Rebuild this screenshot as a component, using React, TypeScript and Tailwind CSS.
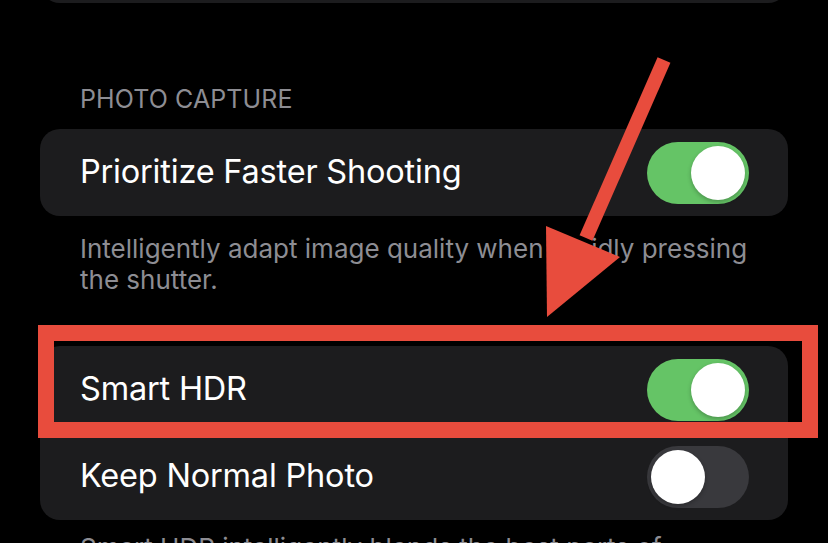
import React from "react";

const Toggle = ({ on }: { on: boolean }) => (
  <div
    className={
      on
        ? "w-[102px] h-[62px] rounded-full bg-[#65c466] p-[4px] flex justify-end"
        : "w-[102px] h-[62px] rounded-full bg-[#39393d] p-[4px] flex justify-start"
    }
  >
    <div className="w-[54px] h-[54px] rounded-full bg-white shadow-[0_2px_4px_rgba(0,0,0,0.25)]" />
  </div>
);

const Row = ({ label, on, divider }: { label: string; on: boolean; divider?: boolean }) => (
  <div className="relative h-[87px] flex items-center justify-between pl-[40px] pr-[39px]">
    <span className="text-[32.5px] text-white tracking-[-0.2px]">{label}</span>
    <Toggle on={on} />
    {divider && <div className="absolute left-[40px] right-0 bottom-0 h-px bg-[#38383a]" />}
  </div>
);

const Arrow = () => (
  <svg
    className="absolute left-0 top-0 pointer-events-none"
    width="828"
    height="543"
    viewBox="0 0 828 543"
  >
    <line x1="664" y1="60" x2="586" y2="238" stroke="#e84c3d" strokeWidth="14" />
    <polygon points="546,226 620,257 547,317" fill="#e84c3d" />
  </svg>
);

export default function App() {
  return (
    <div
      className="relative w-[828px] h-[543px] overflow-hidden bg-black"
      style={{ fontFamily: "Inter, 'Noto Sans', sans-serif" }}
    >
      <div className="mx-[40px] mt-[-80px] h-[83px] rounded-[20px] bg-[#1c1c1e]" />

      <div className="pl-[80px] mt-[82px] text-[25px] leading-[29px] text-[#8d8d93] tracking-[0.1px]">
        PHOTO CAPTURE
      </div>

      <div className="mx-[40px] mt-[15px] rounded-[20px] bg-[#1c1c1e]">
        <Row label="Prioritize Faster Shooting" on />
      </div>

      <div className="pl-[80px] pr-[68px] mt-[17px] text-[26px] leading-[31px] text-[#8d8d93]">
        Intelligently adapt image quality when rapidly pressing the shutter.
      </div>

      <div className="mx-[40px] mt-[51px] rounded-[20px] bg-[#1c1c1e] overflow-hidden">
        <Row label="Smart HDR" on divider />
        <Row label="Keep Normal Photo" on={false} />
      </div>

      <div className="pl-[80px] pr-[60px] mt-[12px] text-[26px] leading-[31px] text-[#8d8d93]">
        Smart HDR intelligently blends the best parts of separate exposures into a single photo.
      </div>

      <div className="absolute left-[38px] top-[325px] w-[780px] h-[113px] border-[16px] border-[#e84c3d]" />
      <Arrow />
    </div>
  );
}
